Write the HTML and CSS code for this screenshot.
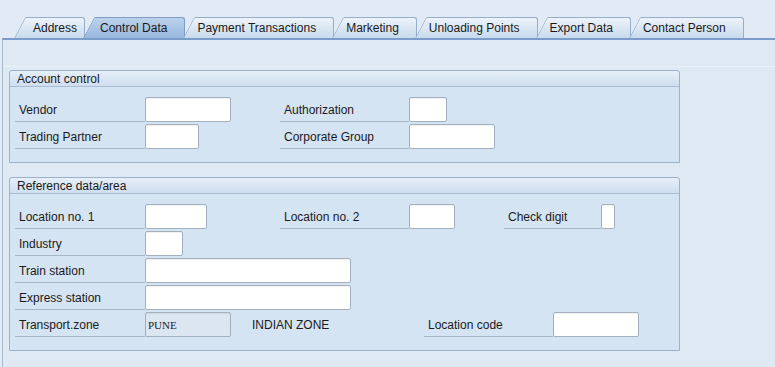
FILE: index.html
```html
<!DOCTYPE html>
<html lang="en">
<head>
  <meta charset="UTF-8" />
  <title>Vendor - Control Data</title>
  <link rel="stylesheet" href="styles.css">
</head>
<body>
  <div class="tabs">
    <div class="tab first"><span>Address</span></div>
    <div class="tab active"><span>Control Data</span></div>
    <div class="tab"><span>Payment Transactions</span></div>
    <div class="tab"><span>Marketing</span></div>
    <div class="tab"><span>Unloading Points</span></div>
    <div class="tab"><span>Export Data</span></div>
    <div class="tab"><span>Contact Person</span></div>
  </div>

  <div class="pane">
    <div class="pane-top"></div>

    <div class="group">
      <div class="group-title">Account control</div>
      <div class="group-body">
        <div class="row">
          <div class="field fa"><label class="lbl">Vendor</label><input class="w86" type="text"></div>
          <div class="field"><label class="lbl lbl2">Authorization</label><input class="w38" type="text"></div>
        </div>
        <div class="row">
          <div class="field fa"><label class="lbl">Trading Partner</label><input class="w54" type="text"></div>
          <div class="field"><label class="lbl lbl2">Corporate Group</label><input class="w86" type="text"></div>
        </div>
      </div>
    </div>

    <div class="group">
      <div class="group-title">Reference data/area</div>
      <div class="group-body">
        <div class="row">
          <div class="field fa"><label class="lbl">Location no. 1</label><input class="w62" type="text"></div>
          <div class="field fb"><label class="lbl lbl2">Location no. 2</label><input class="w46" type="text"></div>
          <div class="field"><label class="lbl lbl3">Check digit</label><input class="w14" type="text"></div>
        </div>
        <div class="row">
          <div class="field"><label class="lbl">Industry</label><input class="w38" type="text"></div>
        </div>
        <div class="row">
          <div class="field"><label class="lbl">Train station</label><input class="w206" type="text"></div>
        </div>
        <div class="row">
          <div class="field"><label class="lbl">Express station</label><input class="w206" type="text"></div>
        </div>
        <div class="row">
          <div class="field"><label class="lbl">Transport.zone</label><input class="w86 readonly" type="text" value="PUNE" readonly></div>
          <span class="desc">INDIAN ZONE</span>
          <div class="field"><label class="lbl lbl2">Location code</label><input class="w86" type="text"></div>
        </div>
      </div>
    </div>
  </div>
</body>
</html>
```

FILE: styles.css
```css
body {
  margin: 0;
  font-family: 'Liberation Sans', Arial, sans-serif;
  font-size: 12px;
  color: #1a1a1a;
  background: #e1eaf5;
}
.tabs {
  display: flex;
  align-items: flex-end;
  height: 38px;
  padding-left: 16px;
  box-sizing: border-box;
}
.tab {
  position: relative;
  z-index: 0;
  height: 21px;
  line-height: 23px;
  padding: 0 18px 0 14px;
  margin-left: -2px;
  white-space: nowrap;
}
.tab.first {
  padding: 0 8px 0 19px;
}
.tab.active {
  padding-left: 17px;
}
.tab::before,
.tab::after {
  content: "";
  position: absolute;
  z-index: -1;
  top: 0;
  bottom: 0;
  background: linear-gradient(#edf3fa, #c9daed);
  border-top: 1px solid #97aecb;
}
.tab::before {
  left: 0;
  width: 14px;
  border-left: 1px solid #97aecb;
  border-top-left-radius: 2px;
  transform: skewX(-28deg);
  transform-origin: left bottom;
}
.tab::after {
  left: 12px;
  right: 0;
  border-right: 1px solid #97aecb;
  border-top-right-radius: 3px;
}
.tab.active::before,
.tab.active::after {
  background: linear-gradient(#bcd2ec, #98b8de);
  border-color: #7f9cc4;
}
.pane {
  margin-left: 2px;
  min-height: calc(100vh - 38px);
  box-sizing: border-box;
  background: #dfe9f4;
  border-top: 2px solid #7c9ccb;
  border-left: 1px solid #a9bccf;
  padding-left: 6px;
}
.pane-top {
  height: 26px;
  border-bottom: 1px solid #e9f0f8;
  margin: 0 0 3px -6px;
}
.group {
  width: 671px;
  box-sizing: border-box;
  border: 1px solid #9db2ca;
  border-radius: 3px 3px 0 0;
  background: #d5e4f3;
  margin-bottom: 14px;
}
.group-title {
  height: 15px;
  line-height: 16px;
  padding-left: 7px;
  border-bottom: 1px solid #a9bed5;
  border-radius: 3px 3px 0 0;
  background: linear-gradient(#e6eff9, #cfdeef);
}
.group-body {
  padding: 10px 0 13px 5px;
}
.row {
  display: flex;
  align-items: center;
  height: 25px;
  margin-bottom: 2px;
}
.row:last-child {
  margin-bottom: 0;
}
.field {
  display: flex;
  flex-shrink: 0;
}
.fa {
  width: 265px;
}
.fb {
  width: 224px;
}
.lbl {
  width: 130px;
  height: 25px;
  box-sizing: border-box;
  line-height: 26px;
  padding-left: 4px;
  border-bottom: 1px solid #a7b5c4;
}
.lbl2 {
  width: 129px;
}
.lbl3 {
  width: 97px;
}
input {
  height: 25px;
  box-sizing: border-box;
  border: 1px solid #a3b0be;
  border-radius: 2px;
  background: #fff;
  box-shadow: inset 0 1px 1px rgba(0,0,0,0.06);
  margin: 0;
  padding: 0 2px;
  font-family: 'Liberation Serif', 'Times New Roman', serif;
  font-size: 11px;
  color: #222;
}
input.readonly {
  background: #dbe6f1;
  outline: none;
}
.w14 { width: 14px; }
.w38 { width: 38px; }
.w46 { width: 46px; }
.w54 { width: 54px; }
.w62 { width: 62px; }
.w86 { width: 86px; }
.w206 { width: 206px; }
.desc {
  margin-left: 21px;
  width: 172px;
  flex-shrink: 0;
  line-height: 26px;
}
```
